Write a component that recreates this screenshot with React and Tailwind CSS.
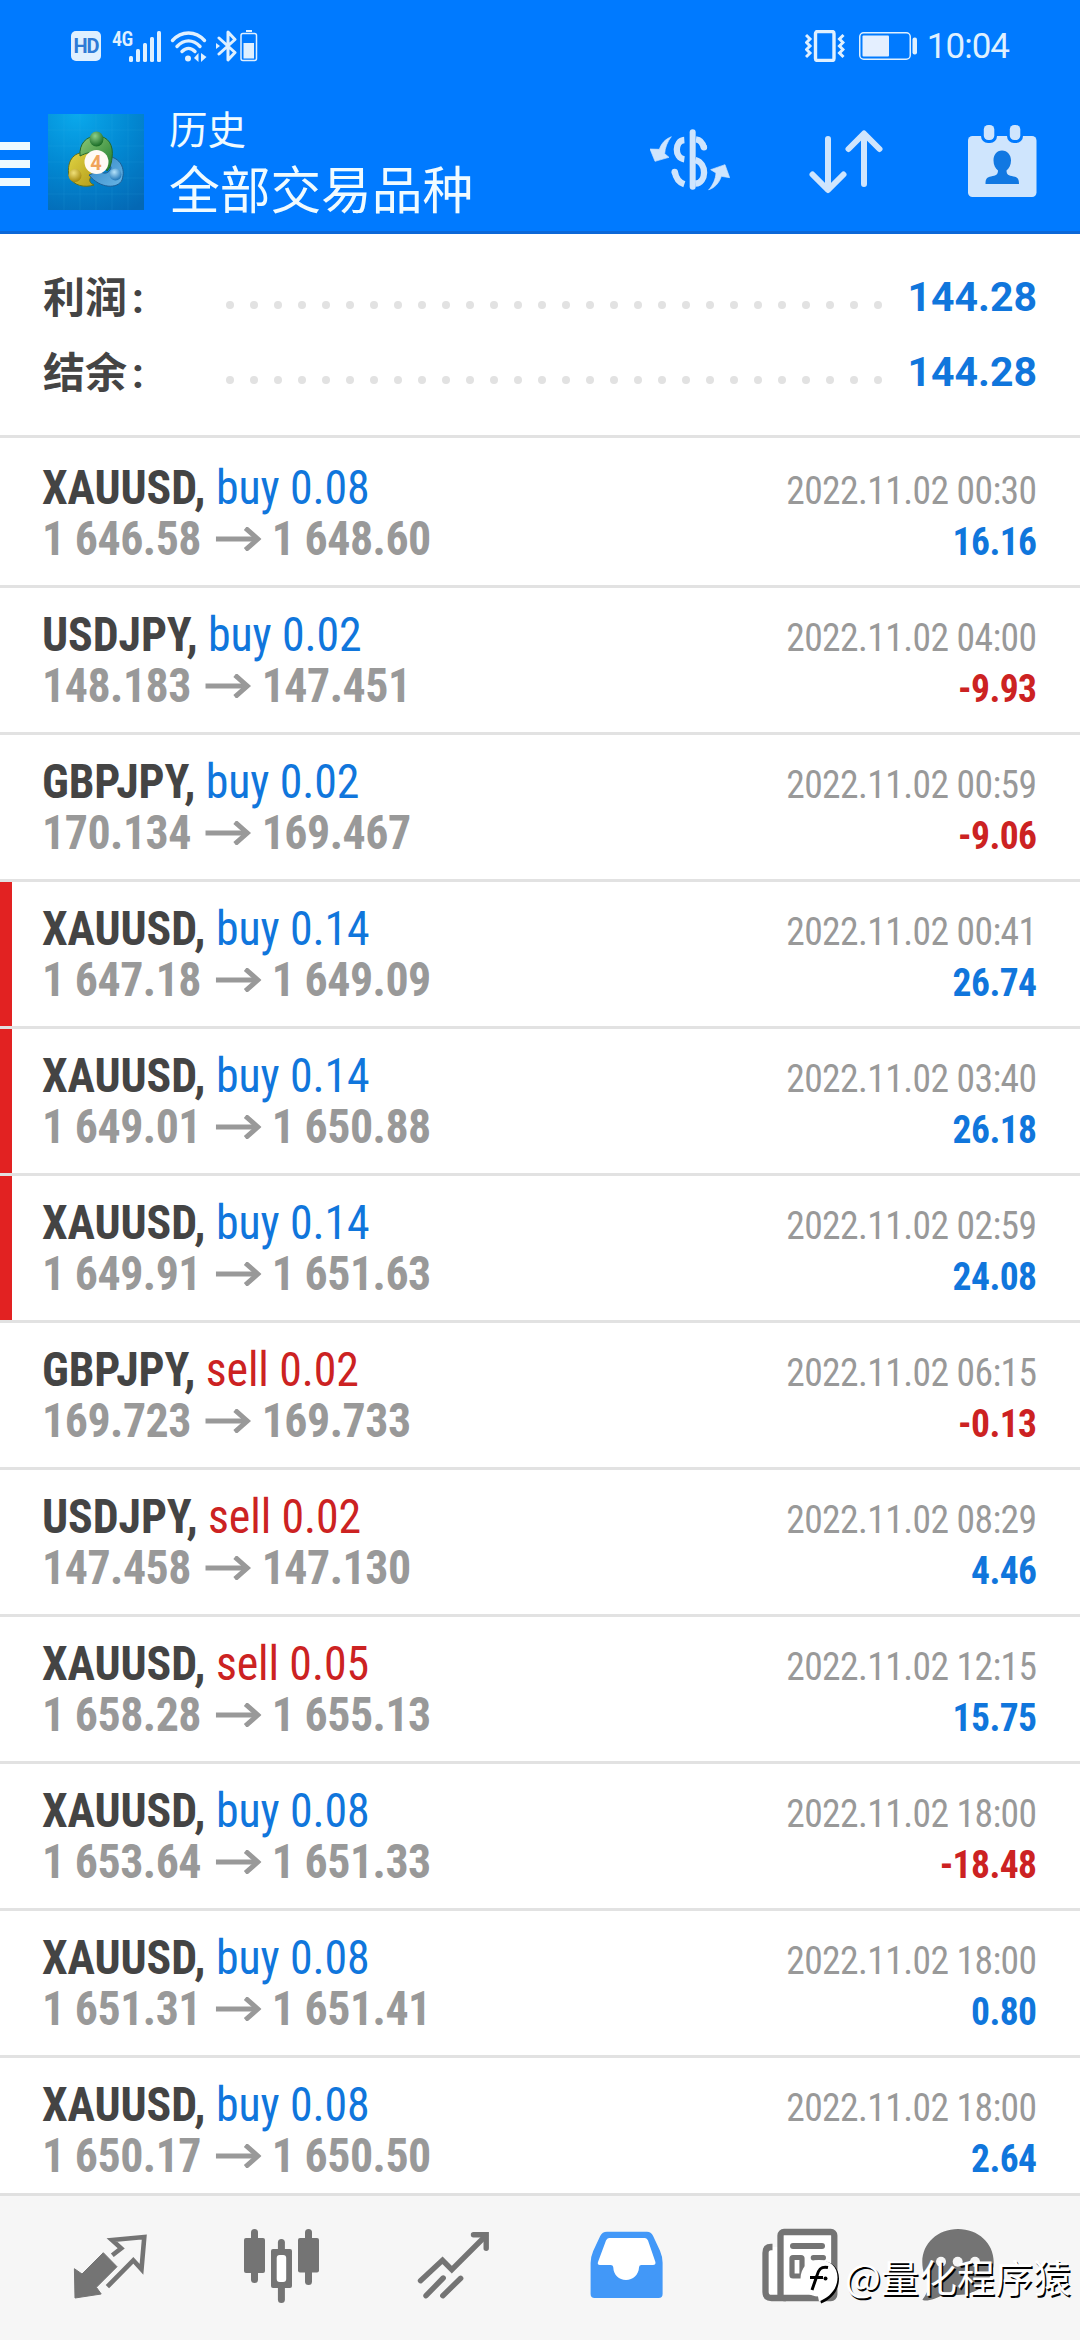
// ─────────────── Data ─────────────────────────────────────────────────────
const summary = [
  { label: "利润", value: "144.28" },
  { label: "结余", value: "144.28" },
];

const deals = [
  { symbol: "XAUUSD", side: "buy", lots: "0.08", open: "1 646.58", close: "1 648.60", time: "2022.11.02 00:30", profit: "16.16" },
  { symbol: "USDJPY", side: "buy", lots: "0.02", open: "148.183", close: "147.451", time: "2022.11.02 04:00", profit: "-9.93" },
  { symbol: "GBPJPY", side: "buy", lots: "0.02", open: "170.134", close: "169.467", time: "2022.11.02 00:59", profit: "-9.06" },
  { symbol: "XAUUSD", side: "buy", lots: "0.14", open: "1 647.18", close: "1 649.09", time: "2022.11.02 00:41", profit: "26.74", marked: true },
  { symbol: "XAUUSD", side: "buy", lots: "0.14", open: "1 649.01", close: "1 650.88", time: "2022.11.02 03:40", profit: "26.18", marked: true },
  { symbol: "XAUUSD", side: "buy", lots: "0.14", open: "1 649.91", close: "1 651.63", time: "2022.11.02 02:59", profit: "24.08", marked: true },
  { symbol: "GBPJPY", side: "sell", lots: "0.02", open: "169.723", close: "169.733", time: "2022.11.02 06:15", profit: "-0.13" },
  { symbol: "USDJPY", side: "sell", lots: "0.02", open: "147.458", close: "147.130", time: "2022.11.02 08:29", profit: "4.46" },
  { symbol: "XAUUSD", side: "sell", lots: "0.05", open: "1 658.28", close: "1 655.13", time: "2022.11.02 12:15", profit: "15.75" },
  { symbol: "XAUUSD", side: "buy", lots: "0.08", open: "1 653.64", close: "1 651.33", time: "2022.11.02 18:00", profit: "-18.48" },
  { symbol: "XAUUSD", side: "buy", lots: "0.08", open: "1 651.31", close: "1 651.41", time: "2022.11.02 18:00", profit: "0.80" },
  { symbol: "XAUUSD", side: "buy", lots: "0.08", open: "1 650.17", close: "1 650.50", time: "2022.11.02 18:00", profit: "2.64" },
];

// ─────────────── Status bar ───────────────────────────────────────────────
const StatusBar = () => (
  <div className="flex h-[92px] items-center pl-[71px] pr-[71px] text-[#dff0ff]">
    <div className="flex h-[30px] w-[30px] items-center justify-center rounded-[5px] bg-[#dff0ff] text-[20px] font-bold leading-none tracking-[-1px] text-[#2f7bd6]">
      HD
    </div>
    <span className="ml-[11px] h-[31px] w-[17px] font-['Roboto_Condensed'] text-[20px] font-semibold leading-[16px] tracking-[-0.5px]">
      4G
    </span>
    <svg className="h-[31px] w-8" viewBox="0 0 32 31" fill="currentColor">
      <rect x="0" y="25" width="4" height="6" rx="1.5" />
      <rect x="7" y="18" width="4" height="13" rx="1.5" />
      <rect x="14" y="12" width="4" height="19" rx="1.5" />
      <rect x="21" y="6" width="4" height="25" rx="1.5" />
      <rect x="28" y="0" width="4" height="31" rx="1.5" />
    </svg>
    <svg className="ml-[9px] h-[31px] w-[37px]" viewBox="0 0 37 31" fill="none" stroke="currentColor" strokeWidth="3.4" strokeLinecap="round">
      <path d="M2.5 9.5C11.5 -.5 25.5 -.5 34.5 9.5" />
      <path d="M7 15.5C14 8 23 8 30 15.5" />
      <path d="M12 20.5C16 16.5 21 16.5 25 20.5" />
      <circle cx="18" cy="27.5" r="3" fill="currentColor" stroke="none" />
      <path d="M28.5 22v9l-4.5-4zM31 31v-9l5.5 4z" fill="currentColor" stroke="none" />
    </svg>
    <svg className="ml-[9px] h-[32px] w-[22px]" viewBox="0 0 22 32" fill="none" stroke="currentColor" strokeWidth="3">
      <path d="M3 8l16 14.5-7 7.5V2l7 7.5L3 24" strokeLinejoin="round" strokeLinecap="round" />
      <path d="M0 13l4 3-4 3z" fill="currentColor" stroke="none" />
    </svg>
    <svg className="ml-[2px] h-[32px] w-[18px]" viewBox="0 0 18 32" fill="none" stroke="currentColor">
      <path d="M6 1h6" strokeWidth="2" />
      <rect x="1" y="3.5" width="15.5" height="27" rx="2" strokeWidth="1.5" />
      <rect x="3.5" y="13" width="10.5" height="15.5" fill="currentColor" stroke="none" />
    </svg>

    <svg className="ml-auto h-[32px] w-[40px]" viewBox="0 0 40 32" fill="none" stroke="currentColor" strokeWidth="3">
      <rect x="10.5" y="1.5" width="18.5" height="29" rx="2" strokeWidth="3.4" />
      <path d="M1 5l4 4-3.5 3.5L5 16l-3.5 3.5L5 23l-4 4M38.5 5l-4 4 3.5 3.5-3.5 3.5 3.5 3.5-3.5 3.5 4 4" />
    </svg>
    <svg className="ml-[14px] h-7 w-[59px]" viewBox="0 0 59 28">
      <rect x=".75" y=".75" width="50.5" height="26.5" rx="4" fill="none" stroke="currentColor" strokeWidth="1.5" />
      <rect x="3.5" y="3.5" width="26.5" height="21" rx="1" fill="#e4efff" />
      <rect x="53.5" y="5.5" width="4.5" height="17" rx="2" fill="currentColor" />
    </svg>
    <span className="ml-[9px] text-[35px] leading-none tracking-[-1px]">10:04</span>
  </div>
);

// ─────────────── App bar icons ────────────────────────────────────────────
const AppLogo = () => (
  <svg className="mt-[22px] ml-[18px] h-24 w-24" viewBox="0 0 96 96">
    <defs>
      <radialGradient id="sky" cx=".3" cy="0" r="1.15">
        <stop offset="0" stopColor="#0aa9ec" />
        <stop offset=".5" stopColor="#0288d2" />
        <stop offset="1" stopColor="#0468b4" />
      </radialGradient>
      <linearGradient id="green" x1="0" y1="0" x2="1" y2="1">
        <stop offset="0" stopColor="#8cc878" />
        <stop offset="1" stopColor="#1f7d2c" />
      </linearGradient>
      <linearGradient id="gold" x1="0" y1="0" x2="1" y2="1">
        <stop offset="0" stopColor="#e0d444" />
        <stop offset="1" stopColor="#b39a18" />
      </linearGradient>
      <linearGradient id="azure" x1="0" y1="0" x2="1" y2="1">
        <stop offset="0" stopColor="#2f83c4" />
        <stop offset="1" stopColor="#69b6e6" />
      </linearGradient>
      <radialGradient id="greenHead" cx=".4" cy=".3" r=".7">
        <stop offset="0" stopColor="#8ed08a" />
        <stop offset="1" stopColor="#176a24" />
      </radialGradient>
      <radialGradient id="goldHead" cx=".4" cy=".3" r=".7">
        <stop offset="0" stopColor="#f0e078" />
        <stop offset="1" stopColor="#a78a0c" />
      </radialGradient>
      <radialGradient id="azureHead" cx=".4" cy=".3" r=".7">
        <stop offset="0" stopColor="#b4e2fa" />
        <stop offset="1" stopColor="#2277b8" />
      </radialGradient>
    </defs>
    <rect width="96" height="96" fill="url(#sky)" />
    <path d="M16 0v96M32 0v96M48 0v96M64 0v96M80 0v96M0 16h96M0 32h96M0 48h96M0 64h96M0 80h96" stroke="#49b8ee" strokeOpacity=".12" />
    {/* three figures around the version badge */}
    <path d="M21 62C18 46 27 36 41 39l8 21c-8 2-10 8-3 11-9 3-21 1-25-9z" fill="url(#gold)" stroke="#5f7020" />
    <path d="M60 42c12 2 18 12 14 24-4 9-22 9-33-5l10-4c6 4 10 2 12-3z" fill="url(#azure)" stroke="#1d5f96" />
    <path d="M32 42c-1-12 6-20 17-20s17 9 15 22c-1 8-3 11-5 13l-9-17c-6-3-12-1-18 2z" fill="url(#green)" stroke="#23682c" />
    <ellipse cx="48.5" cy="25" rx="7" ry="7.5" fill="url(#greenHead)" />
    <circle cx="27" cy="61.5" r="6.5" fill="url(#goldHead)" />
    <circle cx="67.5" cy="60.5" r="6" fill="url(#azureHead)" />
    <circle cx="48.5" cy="48" r="12" fill="#fffaf4" />
    <text x="48" y="55.5" textAnchor="middle" fontSize="20" fontWeight="700" fill="#f0a45c" fontFamily="Roboto, sans-serif">
      4
    </text>
  </svg>
);

const CurrencyIcon = () => (
  <svg className="mt-[36px] h-16 w-20" viewBox="30 40 240 192" fill="none" stroke="#cfe5fd" strokeLinecap="round">
    <path d="M158 53v163" strokeWidth="18" />
    <path d="M133 76c-29 2-31 54 0 58M168 74c11 1 20 10 24 26M104 170c4 24 14 34 29 39M166 136c36 10 34 68 0 71" strokeWidth="19" strokeLinecap="butt" />
    <path d="M192 98v.1M104 172v.1" strokeWidth="19" />
    <path d="M93 67C77 72 64 86 58 104l-28-1 15 37 42-12-13-11c1-18 8-35 19-50z" fill="#cfe5fd" stroke="#cfe5fd" strokeWidth="2" />
    <path d="M207 225c17-5 31-21 37-40l25 4-14-39-43 15 16 10c-1 18-9 35-21 50z" fill="#cfe5fd" stroke="#cfe5fd" strokeWidth="2" />
  </svg>
);

const SortIcon = () => (
  <svg className="mt-[37px] ml-[79px] h-[66px] w-[74px]" viewBox="0 0 74 66" fill="none" stroke="#cfe5fd" strokeWidth="6" strokeLinecap="round" strokeLinejoin="round">
    <path d="M19 10v49M3.5 45.5L19 61l15.5-15.5" />
    <path d="M55 55V6M39.5 20L55 4.5 70.5 20" />
  </svg>
);

const CalendarIcon = () => (
  <svg className="mt-[33px] ml-[85px] h-[72px] w-[69px]" viewBox="0 0 69 72">
    <rect x="0" y="11" width="68.5" height="61" rx="4.5" fill="#cfe5fd" />
    <rect x="13" y="-4" width="16" height="22" rx="7" fill="#007aff" />
    <rect x="39" y="-4" width="16" height="22" rx="7" fill="#007aff" />
    <rect x="15.8" y="0" width="10.5" height="15" rx="4.5" fill="#cfe5fd" />
    <rect x="41.8" y="0" width="10.5" height="15" rx="4.5" fill="#cfe5fd" />
    <path d="M34 25.5c5.5 0 9 4.500 9 10 0 4.500-2 8-4.500 10 0 4 2 5 7 6 4 .8 5.500 2 5.500 7.500H17.500c0-5.500 1.500-6.700 5.500-7.500 5-1 7-2 7-6-2.500-2-4.500-5.500-4.500-10 0-5.500 3-10 8.500-10z" fill="#1178e2" />
  </svg>
);

const AppBar = () => (
  <div className="flex h-[142px] items-start border-b-[3px] border-[#0c68d8] pr-[43px]">
    <div className="mt-[50px] flex w-[30px] flex-col gap-[10px]">
      <span className="h-2 bg-[#eefaff]" />
      <span className="h-2 bg-[#eefaff]" />
      <span className="h-2 bg-[#eefaff]" />
    </div>
    <AppLogo />
    <div className="mt-[5px] ml-[25px] font-['Noto_Sans_CJK_SC',sans-serif] leading-[60px] text-[#f0fbff]">
      <div className="text-[38.5px]">历史</div>
      <h1 className="text-[50.7px]">全部交易品种</h1>
    </div>
    <div className="ml-auto flex items-start">
      <CurrencyIcon />
      <SortIcon />
      <CalendarIcon />
    </div>
  </div>
);

// ─────────────── History list ─────────────────────────────────────────────
const SummaryRow = ({ label, value }) => (
  <div className="flex h-[75px] items-center">
    <span className="w-[183px] pt-1 font-['Roboto','Noto_Sans_CJK_SC',sans-serif] text-[42px] font-bold leading-[71px] text-[#444]">
      {label}
      <span className="ml-[5px]">:</span>
    </span>
    <div className="flex w-[656px] justify-between pt-4">
      {Array.from({ length: 28 }, (_, i) => (
        <span key={i} className="h-2 w-2 rounded-full bg-[#e2e2e2]" />
      ))}
    </div>
    <span className="ml-auto pt-[2px] text-[41px] font-bold leading-[73px] text-[#1076dc]">{value}</span>
  </div>
);

const DealRow = ({ deal }) => (
  <div className="flex h-[147px] shrink-0 border-b-[3px] border-[#e2e2e2] font-['Roboto_Condensed',sans-serif] leading-[51px]">
    <div className={deal.marked ? "w-3 bg-[#e22222]" : "w-3"} />
    <div className="ml-[30px] origin-left scale-x-[0.955] pt-[21px] text-[48px]">
      <div className="tracking-[-0.1px]">
        <span className="font-bold text-[#444]">{deal.symbol},</span>{" "}
        <span className={deal.side === "buy" ? "text-[#1076dc]" : "text-[#cc2222]"}>
          {deal.side} {deal.lots}
        </span>
      </div>
      <div className="flex items-center font-bold tracking-[-0.5px] text-[#999]">
        <span>{deal.open}</span>
        <svg className="mr-[11px] ml-[15px] h-6 w-12" viewBox="0 0 48 24" fill="none" stroke="currentColor" strokeWidth="5">
          <path d="M0 12h44" />
          <path d="M31 1L44 12 31 23" />
        </svg>
        <span>{deal.close}</span>
      </div>
    </div>
    <div className="mr-[43px] ml-auto origin-right scale-x-[0.95] pt-6 text-right text-[39.5px] tracking-[-0.6px]">
      <div className="text-[#999]">{deal.time}</div>
      <div className={`font-bold ${deal.profit.startsWith("-") ? "text-[#cc2222]" : "text-[#1076dc]"}`}>
        {deal.profit}
      </div>
    </div>
  </div>
);

// ─────────────── Bottom navigation ────────────────────────────────────────
const QuotesIcon = () => (
  <svg className="h-[74px] w-[72px] overflow-visible" viewBox="0 0 72 74">
    <path d="M.4 39.7L8 45l21.3-21.3L43 37.7 22.4 58.3l4.8 6.7L1 69z" fill="#747474" stroke="#747474" strokeLinejoin="round" />
    <path d="M38.3 26.3l8.9-7L38 11l32.3-3-2.8 32.3-8.2-9-25.9 26.4" fill="none" stroke="#747474" strokeWidth="4.6" />
  </svg>
);

const ChartIcon = () => (
  <svg className="h-[74px] w-[72px] overflow-visible" viewBox="0 0 72 74" fill="#747474">
    <rect x="-2" y="9" width="21" height="35" rx="2" />
    <rect x="5" y="0" width="7" height="54" rx="3.5" />
    <rect x="25" y="20" width="21" height="39" rx="2" />
    <rect x="31.9" y="10" width="7" height="64" rx="3.5" />
    <rect x="30.7" y="26" width="9.5" height="27" rx="3" fill="#fff" />
    <rect x="52" y="9" width="21" height="34.5" rx="2" />
    <rect x="59" y="0" width="7" height="56" rx="3.5" />
  </svg>
);

const TradeIcon = () => (
  <svg className="h-[74px] w-[72px] overflow-visible" viewBox="0 0 72 74" fill="none" stroke="#747474" strokeWidth="5.4" strokeLinecap="round">
    <path d="M2.5 51.7l22-20.4 9.3 9.4L67.5 7" />
    <path d="M55.5 5.7h12.7v13.6" />
    <path d="M8 66.7L25.2 49M24.8 66.7l17.9-17.4" />
  </svg>
);

const HistoryIcon = () => (
  <svg className="h-[74px] w-[72px] overflow-visible" viewBox="0 0 72 74">
    <path d="M17 2.7h40q4 0 6 4l7 15q2.6 6 2.6 12V65q0 4-4 4h-64q-4 0-4-4V34q0-6 2.6-12l7-15q2-4.3 6.8-4.3z" fill="#4298f8" />
    <path d="M19 9h36q2 0 3 2.5L65.4 33q.6 3-2.4 3H51q-2 0-2 2.5C48.600 46 43 51 36 51s-12.500-5-12.700-12.500Q23.300 36 21 36H10q-3 0-2-3L16 11.500Q17 9 19 9z" fill="#fff" />
  </svg>
);

const NewsIcon = () => (
  <svg className="h-[74px] w-[72px] overflow-visible" viewBox="0 0 72 74">
    <rect x="5" y="18" width="12" height="50" fill="#fff" />
    <path d="M10.5 18H9q-5.5 0-5.5 6v39q0 6 6 6H24" fill="none" stroke="#747474" strokeWidth="6.3" />
    <rect x="18.5" y="3" width="53.8" height="66" rx="3.5" fill="#fff" stroke="#747474" strokeWidth="6.3" />
    <rect x="28" y="14" width="35" height="6" rx="3" fill="#747474" />
    <rect x="30" y="28.5" width="10" height="18.5" rx="1" fill="none" stroke="#747474" strokeWidth="5.2" />
    <rect x="48.7" y="26" width="15.3" height="5.5" rx="2.7" fill="#747474" />
  </svg>
);

const ChatIcon = () => (
  <svg className="-ml-[13px] h-[74px] w-[73px] overflow-visible" viewBox="0 0 73 74">
    <path d="M37 0C17 0 1.3 14 1.3 33c0 9 3 16 7.7 21-1 6-3.5 11-7.5 16.5C2 72.5 14 72 24 64c4 1.5 8 2 13 2 20 0 35.7-14 35.7-33S57 0 37 0z" fill="#747474" />
    <circle cx="20" cy="32.7" r="5" fill="#f6f6f6" />
    <circle cx="36.7" cy="32.7" r="5" fill="#f6f6f6" />
    <circle cx="54" cy="32.7" r="5" fill="#f6f6f6" />
  </svg>
);

const BottomNav = () => (
  <nav className="flex h-[147px] shrink-0 items-start gap-[100px] border-t-[3px] border-[#e0e0e0] bg-[#f6f6f6] pt-[33px] pl-[74px]">
    <QuotesIcon />
    <ChartIcon />
    <TradeIcon />
    <HistoryIcon />
    <NewsIcon />
    <ChatIcon />
  </nav>
);

// floating author tag over the navigation bar
const AuthorTag = () => (
  <div className="absolute right-[9px] bottom-[36px] flex h-[44px] items-start">
    <svg className="h-[44px] w-[40px] overflow-visible" viewBox="0 0 40 44">
      <path d="M20 1C9 1 1 8 1 18.5c0 9 6 17 17.5 18l1.5 7c10-4 18-12 18-25C38 8 31 1 20 1z" fill="#000" />
      <path d="M18 0C7 0-.5 8-.5 18.5S7 36 17 36.5l1 5c10-4 18.5-12 18.5-24C36.5 7 29 0 18 0z" fill="#fff" />
      <path d="M27 7.5c-7-1.5-9.5 2-11 8L11 30M9 17.5h13" fill="none" stroke="#000" strokeWidth="3" />
      <circle cx="24.5" cy="18.5" r="2" fill="#000" />
    </svg>
    <span className="ml-[4px] font-['Noto_Sans_CJK_SC',sans-serif] text-[38px] leading-[32px] text-white [text-shadow:1.5px_1.5px_0_#000]">
      @量化程序猿
    </span>
  </div>
);

// ─────────────── Main component ──────────────────────────────────────────
const App = () => {
  return (
    <div className="relative flex h-[2340px] w-[1080px] flex-col overflow-hidden bg-white font-['Roboto',sans-serif]">
      <header className="shrink-0 bg-[#007aff]">
        <StatusBar />
        <AppBar />
      </header>

      <section className="h-[204px] shrink-0 border-b-[3px] border-[#e2e2e2] px-[43px] pt-[25px]">
        {summary.map((row) => (
          <SummaryRow key={row.label} {...row} />
        ))}
      </section>

      <main className="flex min-h-0 flex-1 flex-col overflow-hidden pt-[3px]">
        {deals.map((deal, i) => (
          <DealRow key={i} deal={deal} />
        ))}
      </main>

      <BottomNav />
      <AuthorTag />
    </div>
  );
};

export default App;
